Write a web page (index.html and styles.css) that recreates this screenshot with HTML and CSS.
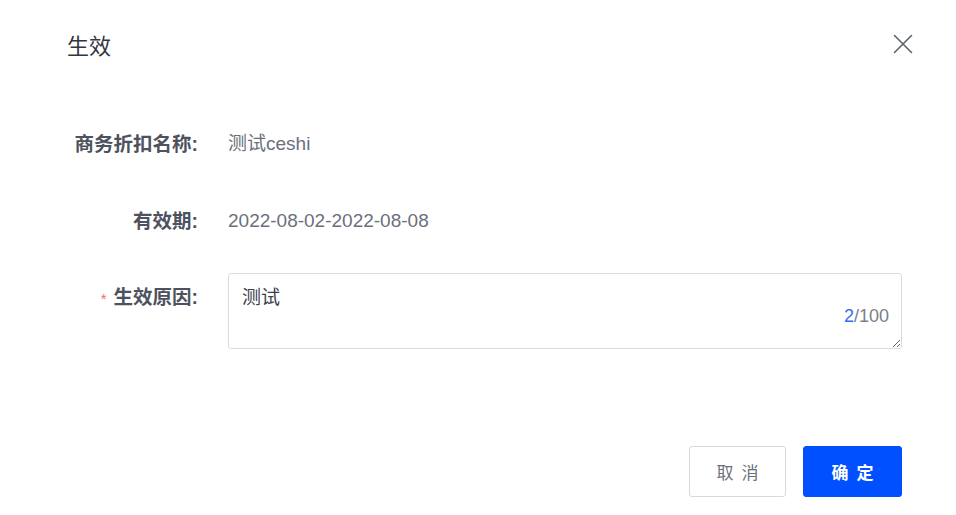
FILE: index.html
```html
<!DOCTYPE html>
<html lang="zh-CN">
<head>
<meta charset="utf-8">
<title>生效</title>
<link rel="stylesheet" href="styles.css">
</head>
<body>
<div class="dialog">
  <div class="dialog-header">
    <span class="dialog-title">生效</span>
    <button class="close-btn" aria-label="关闭">
      <svg width="20" height="20" viewBox="0 0 20 20"><path d="M1.5 1.5 L18.5 18.5 M18.5 1.5 L1.5 18.5" stroke="#5c616d" stroke-width="1.6" fill="none" stroke-linecap="round"/></svg>
    </button>
  </div>
  <div class="form">
    <div class="form-row row-name">
      <div class="form-label">商务折扣名称:</div>
      <div class="form-value">测试ceshi</div>
    </div>
    <div class="form-row row-date">
      <div class="form-label">有效期:</div>
      <div class="form-value">2022-08-02-2022-08-08</div>
    </div>
    <div class="form-row row-reason">
      <div class="form-label label-top"><span class="required">*</span>生效原因:</div>
      <div class="textarea-wrap">
        <textarea class="textarea">测试</textarea>
        <span class="counter"><span class="count-now">2</span>/100</span>
      </div>
    </div>
  </div>
  <div class="dialog-footer">
    <button class="btn btn-default">取消</button>
    <button class="btn btn-primary">确定</button>
  </div>
</div>
</body>
</html>
```
FILE: styles.css
```css
* { box-sizing: border-box; }
html, body {
  margin: 0;
  padding: 0;
  background: #ffffff;
  font-family: "Liberation Sans", Arial, "Noto Sans CJK SC", sans-serif;
}
.dialog {
  width: 956px;
  height: 515px;
  background: #fff;
}
.dialog-header {
  height: 88px;
  display: flex;
  align-items: center;
  justify-content: space-between;
  padding: 0 43px 0 67px;
}
.dialog-title {
  font-size: 22px;
  color: #333740;
  font-weight: normal;
}
.close-btn {
  border: 0;
  background: transparent;
  padding: 0;
  width: 20px;
  height: 20px;
  display: flex;
  cursor: pointer;
}
.form {
  margin-top: 42px;
}
.form-row {
  display: flex;
  align-items: flex-start;
}
.row-name { margin-bottom: 49px; }
.row-date { margin-bottom: 38px; }
.form-label {
  width: 198px;
  text-align: right;
  font-size: 19.5px;
  line-height: 28px;
  font-weight: bold;
  color: #4d525e;
  margin-right: 30px;
  flex-shrink: 0;
}
.label-top { padding-top: 10px; }
.required {
  color: #f56c6c;
  font-size: 15px;
  margin-right: 7px;
  font-weight: normal;
}
.form-value {
  font-size: 19px;
  line-height: 28px;
  color: #6b707c;
}
.textarea-wrap {
  position: relative;
  width: 674px;
  height: 76px;
}
.textarea {
  display: block;
  width: 674px;
  height: 76px;
  border: 1px solid #d9dce2;
  border-radius: 3px;
  padding: 11px 13px;
  font-family: "Liberation Sans", Arial, "Noto Sans CJK SC", sans-serif;
  font-size: 19px;
  line-height: 26px;
  color: #3a3f4b;
  resize: vertical;
  outline: none;
}
.counter {
  position: absolute;
  right: 13px;
  bottom: 23px;
  font-size: 18px;
  line-height: 20px;
  color: #7a7f8a;
}
.count-now { color: #2f6bff; }
.dialog-footer {
  margin-top: 97px;
  display: flex;
  justify-content: flex-end;
  gap: 17px;
  padding-right: 54px;
}
.btn {
  height: 51px;
  border-radius: 3px;
  font-family: "Liberation Sans", Arial, "Noto Sans CJK SC", sans-serif;
  font-size: 17px;
  letter-spacing: 8px;
  padding: 0 0 0 8px;
  cursor: pointer;
}
.btn-default {
  width: 97px;
  background: #fff;
  border: 1px solid #d6d9df;
  color: #6b707c;
}
.btn-primary {
  width: 99px;
  background: #0050ff;
  border: 1px solid #0050ff;
  color: #fff;
  font-weight: bold;
}
```
